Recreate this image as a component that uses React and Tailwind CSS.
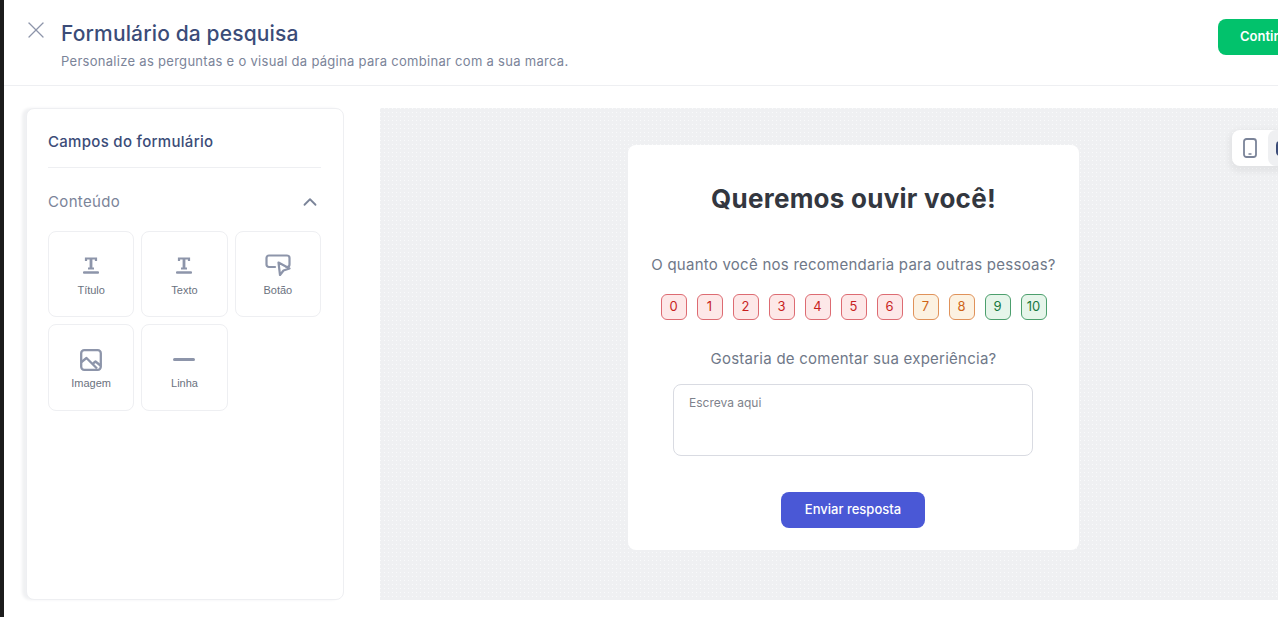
import React from "react";
import { ChevronUp, X } from "lucide-react";

const scores = [
  { n: 0, c: "red" }, { n: 1, c: "red" }, { n: 2, c: "red" }, { n: 3, c: "red" },
  { n: 4, c: "red" }, { n: 5, c: "red" }, { n: 6, c: "red" },
  { n: 7, c: "orange" }, { n: 8, c: "orange" },
  { n: 9, c: "green" }, { n: 10, c: "green" },
];

const scoreStyle = {
  red: "bg-[#fde8e8] border-[#dd6b72] text-[#c81e1e]",
  orange: "bg-[#fcf2e2] border-[#e0925a] text-[#cf6417]",
  green: "bg-[#e6f5ea] border-[#4c9f6d] text-[#17783f]",
};

const TextIcon = () => (
  <svg width="16" height="18" viewBox="0 0 16 18" fill="none" stroke="#8d95aa">
    <path d="M3 5V2.500H13V5" strokeWidth="2.200" />
    <path d="M8 2.500V12.500" strokeWidth="2.800" />
    <path d="M5 12.500H11" strokeWidth="2" />
    <path d="M1 16.500H15" strokeWidth="2.400" strokeLinecap="round" />
  </svg>
);

const ButtonIcon = () => (
  <svg width="26" height="22" viewBox="0 0 26 22" fill="none" stroke="#8d95aa" strokeWidth="2.200" strokeLinejoin="round" strokeLinecap="round">
    <path d="M10 13H4C2.500 13 1.500 12 1.500 10.500V4C1.500 2.500 2.500 1.500 4 1.500H22C23.500 1.500 24.500 2.500 24.500 4V10.500C24.500 12 23.500 13 22 13H21.500" />
    <path d="M13.500 8.500L24.500 14.500L18.500 16.500L15 21Z" />
  </svg>
);

const ImageIcon = () => (
  <svg width="22" height="26" viewBox="0 -4 22 26" fill="none" stroke="#8d95aa" strokeWidth="2.300" strokeLinejoin="round">
    <rect x="1.200" y="1.200" width="19.600" height="19.600" rx="3" />
    <path d="M1.500 13L6.500 9L17 19.500" />
    <path d="M13 14.500L15.500 12.500L20.500 16.500" />
  </svg>
);

const LineIcon = () => <div className="mt-[3px] h-[3px] w-[22px] rounded-full bg-[#8d95aa]" />;

const fields = [
  { label: "Título", icon: <TextIcon /> },
  { label: "Texto", icon: <TextIcon /> },
  { label: "Botão", icon: <ButtonIcon /> },
  { label: "Imagem", icon: <ImageIcon /> },
  { label: "Linha", icon: <LineIcon /> },
];

export default function App() {
  return (
    <div className="relative flex h-[617px] w-[1278px] overflow-hidden bg-white font-['Inter',sans-serif]">
      <div className="w-1 shrink-0 bg-[#1c1c1c]" />
      <div className="flex min-w-0 flex-1 flex-col">
        <header className="flex h-[86px] shrink-0 items-start border-b border-[#eeeff2] pl-[18px]">
          <X size={28} strokeWidth={1.1} className="mt-[16px] text-[#8d95aa]" />
          <div className="ml-[11px] min-w-0 pt-5">
            <h1 className="text-[21px] leading-7 font-medium tracking-[0.14px] text-[#3b4c78]">Formulário da pesquisa</h1>
            <p className="mt-[3px] text-[13px] leading-5 tracking-[0.29px] text-[#7b8499]">
              Personalize as perguntas e o visual da página para combinar com a sua marca.
            </p>
          </div>
          <button className="mt-[19px] ml-auto -mr-[60px] h-9 w-[120px] shrink-0 rounded-lg bg-[#02c26c] pl-[22px] text-left text-[13px] font-semibold text-white">
            Continuar
          </button>
        </header>

        <main className="flex min-h-0 flex-1 items-start pt-[22px] pl-[22px]">
          <aside className="h-[492px] w-[318px] shrink-0 rounded-lg border border-[#eeeff2] bg-white pr-[22px] pl-[21px] shadow-[-4px_0_3px_#f0f1f3]">
            <h2 className="mt-[23px] text-[15px] leading-5 font-medium tracking-[0.3px] text-[#3b4c78]">Campos do formulário</h2>
            <div className="mt-[15px] border-t border-[#eeeff2]" />
            <div className="mt-6 flex h-5 items-center justify-between">
              <span className="text-[15px] leading-5 tracking-[0.35px] text-[#7b8499]">Conteúdo</span>
              <ChevronUp size={22} strokeWidth={2} className="text-[#7b8499]" />
            </div>
            <div className="mt-[19px] grid grid-cols-3 gap-[7px]">
              {fields.map((f) => (
                <div key={f.label} className="flex aspect-square flex-col items-center rounded-lg border border-[#eeeff2] pt-[18px]">
                  <div className="flex h-[30px] items-center justify-center">{f.icon}</div>
                  <span className="mt-[3px] font-['Liberation_Sans',sans-serif] text-[11px] leading-[14px] text-[#6b7280]">{f.label}</span>
                </div>
              ))}
            </div>
          </aside>

          <section className="ml-9 flex h-[492px] w-[947px] shrink-0 justify-center bg-[#eff0f2] bg-[radial-gradient(circle_at_0.5px_0.5px,#f9fafb_0.7px,transparent_0.8px)] bg-[size:4px_4px] pt-[37px]">
            <div className="flex h-[405px] w-[451px] flex-col items-center rounded-lg bg-white">
              <h3 className="mt-[36px] text-[26px] leading-9 font-bold tracking-[0.25px] text-[#33373f]">Queremos ouvir você!</h3>
              <p className="mt-[38px] text-[15px] leading-5 tracking-[0.25px] text-[#6f7888]">
                O quanto você nos recomendaria para outras pessoas?
              </p>
              <div className="mt-[19px] flex gap-[10px]">
                {scores.map((s) => (
                  <div
                    key={s.n}
                    className={`flex size-[26px] items-center justify-center rounded-md border text-[13px] ${scoreStyle[s.c]}`}
                  >
                    {s.n}
                  </div>
                ))}
              </div>
              <p className="mt-[29px] text-[15px] leading-5 tracking-[0.25px] text-[#6f7888]">
                Gostaria de comentar sua experiência?
              </p>
              <textarea
                readOnly
                placeholder="Escreva aqui"
                className="mt-[15px] ml-[45px] h-[72px] w-[360px] resize-none self-start rounded-lg border border-[#d9dbe2] px-[15px] py-[10px] text-[12px] leading-4 outline-none placeholder:text-[#7e828c]"
              />
              <button className="mt-9 ml-[153px] h-9 w-[144px] self-start rounded-lg bg-[#4a58d6] text-[13px] font-medium text-white">
                Enviar resposta
              </button>
            </div>
          </section>
        </main>
      </div>

      <div className="absolute top-[130px] left-[1232px] flex h-9 w-[72px] items-center rounded-lg bg-white shadow-[0_3px_6px_3px_rgba(0,0,0,0.05)]">
        <div className="flex w-9 justify-center">
          <svg width="14" height="20" viewBox="0 0 14 20" fill="none">
            <rect x="1" y="1" width="12" height="18" rx="2.500" stroke="#7b8499" strokeWidth="1.800" />
            <path d="M5.500 16H8.500" stroke="#7b8499" strokeWidth="1.500" />
          </svg>
        </div>
        <div className="flex h-9 w-9 items-center justify-center rounded-lg bg-[#eff0f2]">
          <div className="h-[15px] w-5 rounded-sm border-2 border-[#3b4c78]" />
        </div>
      </div>
    </div>
  );
}
